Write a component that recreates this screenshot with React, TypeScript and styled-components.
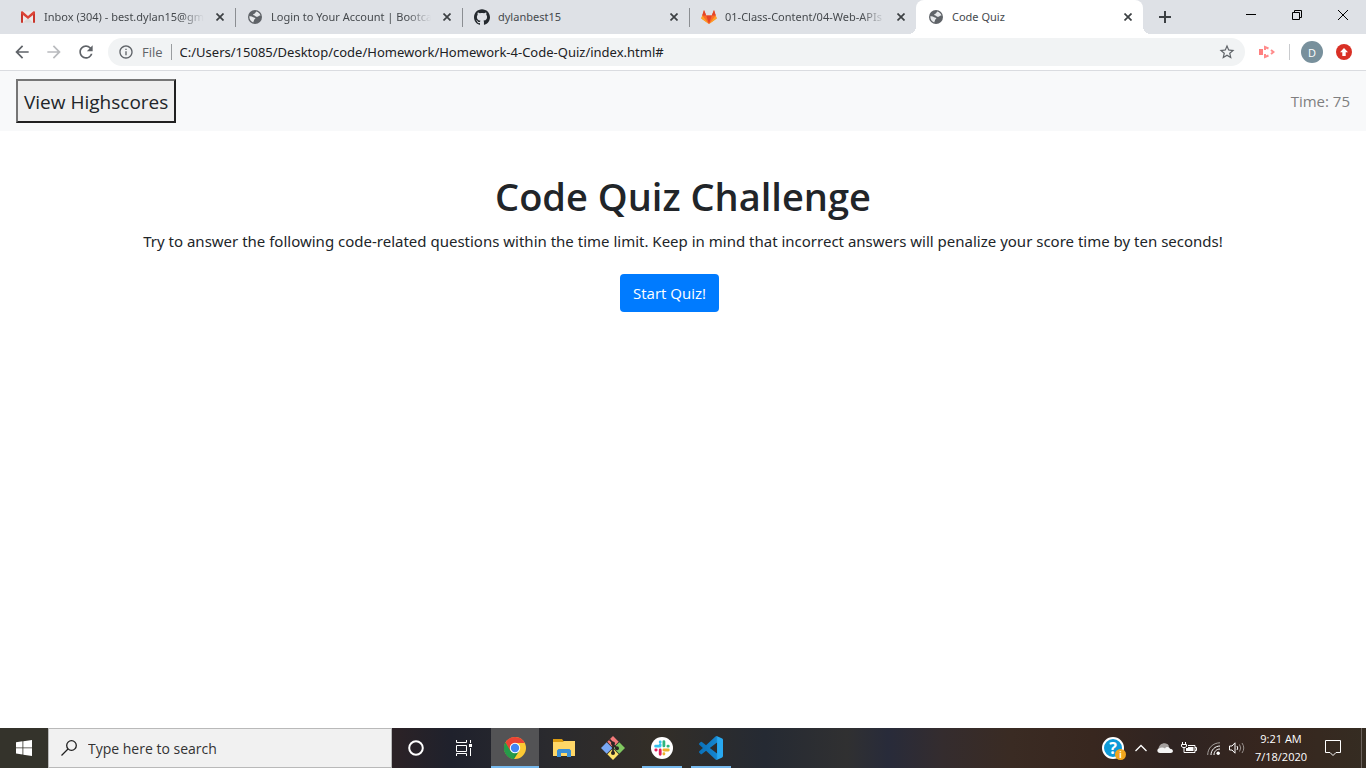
import React from "react";
import styled, { createGlobalStyle, css } from "styled-components";
import { SiGithub } from "react-icons/si";
import { MdRefresh, MdArrowBack, MdArrowForward, MdStarBorder, MdInfoOutline } from "react-icons/md";

const Global = createGlobalStyle`
  * { box-sizing: border-box; }
  html, body { margin: 0; }
  body {
    font-family: "Open Sans", "Segoe UI", sans-serif;
    background: #fff;
    color: #212529;
  }
  button, input { font-family: inherit; }
`;

const wideFont = `"Noto Sans", "Segoe UI", sans-serif`;

const iconButton = css`
  display: flex;
  align-items: center;
  justify-content: center;
  padding: 0;
  border: 0;
  background: none;
  color: inherit;
  flex: none;
`;

const Screen = styled.div`
  min-height: 100vh;
  display: flex;
  flex-direction: column;
`;

/* Browser tab strip */
const TabStrip = styled.header`
  display: flex;
  align-items: stretch;
  height: 34px;
  background: #dee1e6;
  color: #45494d;
`;

const Tabs = styled.div`
  display: flex;
  flex: 0 1 1135px;
  min-width: 0;
  margin-left: 8px;
`;

const Tab = styled.div<{ $active?: boolean; $divider?: boolean }>`
  position: relative;
  flex: 1 1 0;
  min-width: 0;
  display: flex;
  align-items: center;
  gap: 8px;
  padding: 0 7px 0 12px;
  border-radius: 8px 8px 0 0;
  background: ${(p) => (p.$active ? "#fff" : "transparent")};

  ${(p) =>
    p.$divider &&
    css`
      &::after {
        content: "";
        position: absolute;
        right: -1px;
        top: 8px;
        height: 19px;
        width: 1px;
        background: #8b8e92;
      }
    `}
  ${(p) =>
    p.$active &&
    css`
      &::before,
      &::after {
        content: "";
        position: absolute;
        bottom: 0;
        width: 8px;
        height: 8px;
      }
      &::before {
        right: 100%;
        background: radial-gradient(circle at 0 0, transparent 8px, #fff 8px);
      }
      &::after {
        left: 100%;
        background: radial-gradient(circle at 100% 0, transparent 8px, #fff 8px);
      }
    `}
`;

const TabIcon = styled.span`
  display: flex;
  flex: none;
  width: 16px;
  height: 16px;
  color: #5f6368;
`;

const TabTitle = styled.span<{ $fade?: boolean }>`
  flex: 1;
  min-width: 0;
  overflow: hidden;
  white-space: nowrap;
  font-family: ${wideFont};
  font-size: 11px;
  line-height: 16px;
  ${(p) => p.$fade && css`mask-image: linear-gradient(to left, transparent, #000 24px);`}
`;

const CloseTab = styled.button`
  ${iconButton}
  width: 16px;
  height: 16px;
  color: #3c4043;
`;

const NewTab = styled.button`
  ${iconButton}
  width: 28px;
  margin-left: 8px;
  color: #3c4043;
`;

const WindowControls = styled.div`
  display: flex;
  margin-left: auto;
  height: 29px;
`;

const WindowButton = styled.button`
  ${iconButton}
  width: 46px;
  color: #000;
`;

/* Browser toolbar */
const Toolbar = styled.div`
  display: flex;
  align-items: center;
  height: 37px;
  padding: 0 14px 0 12px;
  border-bottom: 1px solid #dadce0;
  color: #5f6368;
`;

const NavButtons = styled.div`
  display: flex;
  gap: 12px;
  margin-right: 12px;
`;

const ToolButton = styled.button<{ $muted?: boolean }>`
  ${iconButton}
  width: 20px;
  height: 20px;
  color: ${(p) => (p.$muted ? "#b9bbbe" : "#5f6368")};
`;

const AddressBar = styled.div`
  flex: 1;
  display: flex;
  align-items: center;
  height: 28px;
  padding: 0 8px 0 10px;
  border-radius: 14px;
  background: #f1f3f4;
  font-size: 13px;
`;

const Scheme = styled.label`
  margin-left: 8px;
  padding-right: 8px;
  line-height: 16px;
  border-right: 1px solid #9a9da0;
`;

const Url = styled.input`
  flex: 1;
  min-width: 0;
  padding: 0 8px;
  border: 0;
  outline: 0;
  background: none;
  font-family: ${wideFont};
  font-size: 13px;
  color: #202124;
`;

const ToolbarExtras = styled.div`
  display: flex;
  align-items: center;
  margin-left: 12px;
`;

const Separator = styled.span`
  width: 1px;
  height: 16px;
  margin: 0 11px 0 12px;
  background: #c9cbce;
`;

const Avatar = styled.button`
  ${iconButton}
  width: 22px;
  height: 22px;
  margin-right: 13px;
  border-radius: 50%;
  background: #78909c;
  color: #fff;
  font-size: 11px;
`;

/* Quiz page */
const Navbar = styled.nav`
  display: flex;
  align-items: center;
  justify-content: space-between;
  height: 60px;
  padding: 0 16px;
  background: #f8f9fa;
`;

const Highscores = styled.button`
  height: 44px;
  padding: 1px 6px 0;
  border: 2px solid;
  border-color: #767676 #212121 #212121 #767676;
  background: #efefef;
  color: #212529;
  font-size: 19px;
`;

const Timer = styled.span`
  font-size: 15px;
  color: #7f7f80;
`;

const Main = styled.main`
  flex: 1;
  display: flex;
  flex-direction: column;
  align-items: center;
  padding: 40px 16px 0;
  text-align: center;
`;

const Title = styled.h1`
  margin: 0 0 8px;
  font-size: 38px;
  font-weight: 600;
  line-height: 50px;
`;

const Intro = styled.p`
  margin: 0 0 21px;
  font-family: ${wideFont};
  font-size: 15px;
  line-height: 24px;
`;

const StartButton = styled.button`
  height: 38px;
  padding: 0 13px;
  margin-right: 27px;
  border: 0;
  border-radius: 4px;
  background: #007bff;
  color: #fff;
  font-size: 15px;
`;

/* Windows taskbar */
const Taskbar = styled.footer`
  display: flex;
  align-items: stretch;
  height: 40px;
  color: #fff;
  background: linear-gradient(
    90deg,
    #34332b 0%, #34332b 3%, #2b2226 29%, #1f212c 33%, #2a2a2e 40%, #332e27 48%,
    #252a33 56%, #303031 62%, #282b3a 65%, #342c2e 69%, #3a2b23 74%, #38271f 80%,
    #2f2422 86%, #37261e 93%, #352c22 100%
  );
`;

const StartMenu = styled.button`
  ${iconButton}
  width: 48px;
`;

const SearchBox = styled.label`
  display: flex;
  align-items: center;
  gap: 11px;
  flex: 0 1 344px;
  padding: 0 12px;
  border: 1px solid #b9b9b9;
  background: #f1f1f1;
  color: #202020;
`;

const SearchInput = styled.input`
  flex: 1;
  min-width: 0;
  padding: 0;
  border: 0;
  outline: 0;
  background: none;
  font-size: 14px;
  &::placeholder { color: #333; opacity: 1; }
`;

const SystemApps = styled.div`
  display: flex;
  margin-right: 3px;
`;

const Apps = styled.div`
  display: flex;
  gap: 1px;
`;

const AppButton = styled.button<{ $running?: boolean; $focused?: boolean }>`
  ${iconButton}
  position: relative;
  width: 48px;
  background: ${(p) => (p.$focused ? "#535355" : "none")};
  ${(p) =>
    (p.$running || p.$focused) &&
    css`
      &::after {
        content: "";
        position: absolute;
        bottom: 0;
        left: ${p.$focused ? 0 : 4}px;
        right: ${p.$focused ? 0 : 4}px;
        height: 2px;
        background: #76b9ed;
      }
    `}
`;

const Tray = styled.div`
  display: flex;
  align-items: center;
  margin-left: auto;
`;

const TrayButton = styled.button<{ $width?: number }>`
  ${iconButton}
  width: ${(p) => p.$width ?? 24}px;
  height: 36px;
`;

const HelpMark = styled.span`
  position: relative;
  display: flex;
  align-items: center;
  justify-content: center;
  width: 22px;
  height: 22px;
  border: 2px solid #fff;
  border-radius: 50%;
  background: #0e9ad8;
  color: #fff;
  font-size: 16px;
  font-weight: 700;
`;

const HelpBadge = styled.span`
  position: absolute;
  right: -4px;
  bottom: -3px;
  width: 11px;
  height: 11px;
  border-radius: 50%;
  background: #f0a51e;
  font-size: 8px;
  line-height: 11px;
  text-align: center;
`;

const Clock = styled.time`
  width: 64px;
  text-align: center;
  font-size: 11px;
  line-height: 18px;
`;

const ShowDesktop = styled.button`
  ${iconButton}
  width: 5px;
  height: 40px;
  margin-left: 8px;
  border-left: 1px solid #6b625d;
`;

const Cross = () => (
  <svg width="8" height="8" viewBox="0 0 8 8" stroke="currentColor" strokeWidth="1.7">
    <path d="M0.5 0.5 7.5 7.5M7.5 0.5 0.5 7.5" />
  </svg>
);

const Globe = () => (
  <svg width="16" height="16" viewBox="0 0 16 16">
    <circle cx="8" cy="8" r="7" fill="#5f6368" />
    <path
      d="M2.300 7.200C3.800 7 5 7.300 6.200 8.200 7.300 9 8.300 8.300 8.300 9.600c0 .9-1.200.6-1.300 1.600 0 .9-.5 1.300-.8 2.200C3.800 12.600 2.200 10.200 2.300 7.200zM9.300 2.500c2 .5 3.600 2 4.200 4-.9-.3-1.600.2-2.400.9-.9.7-2.100.6-2.600-.2-.5-.9-1.700-.5-2.300-1.200C5.800 5.200 7 5 7.800 4.500c.8-.5.700-1.300 1.500-2z"
      fill="#e6e8ea"
    />
  </svg>
);

const Gmail = () => (
  <svg width="16" height="16" viewBox="0 0 16 16">
    <path d="M1 2.500h14v11.300H1z" fill="#eceaea" />
    <path d="M3 13.800 8 9l5 4.800z" fill="#d9d9d9" />
    <path d="M1 13.800V3.600L3 4v9.800zM13 13.800V4l2-.4v10.200z" fill="#c9352b" />
    <path d="M1 4.600V3.200C1 2.200 2.200 2 2.800 2.600L8 7l5.200-4.400c.6-.6 1.800-.4 1.800.6v1.400L8 10z" fill="#db4437" />
  </svg>
);

const Gitlab = () => (
  <svg width="16" height="16" viewBox="0 0 16 16">
    <path d="M8 15 .3 9.400 3 1l2.300 5.500h5.400L13 1l2.700 8.400z" fill="#fc6d26" />
    <path d="M8 15 5.200 6.500h5.600z" fill="#e24329" />
    <path d="M8 15 .3 9.400l.9-2.900zM8 15l7.700-5.600-.9-2.900z" fill="#fca326" />
    <path d="M1.200 6.500 3 1l2.200 5.500zM14.800 6.500 13 1l-2.200 5.500z" fill="#e24329" />
  </svg>
);

const Chrome = () => (
  <svg width="24" height="24" viewBox="0 0 24 24">
    <circle cx="12" cy="12" r="11" fill="#fcc934" />
    <path d="M12 12 6.800 15 2.470 6.500A11 11 0 0 0 11 23l5.500-8.500z" fill="#1e8e3e" />
    <path d="M2.470 6.500A11 11 0 0 1 21.800 7H12l-5.200 8z" fill="#ea4335" />
    <path d="M2.470 6.500 7.200 14.500 12 17 10.500 22.900A11 11 0 0 1 2.470 6.500z" fill="#269a4a" />
    <circle cx="12" cy="12" r="5.200" fill="#fff" />
    <circle cx="12" cy="12" r="4.200" fill="#4285f4" />
  </svg>
);

const Explorer = () => (
  <svg width="22" height="18" viewBox="0 0 22 18">
    <path d="M0 0h9l1.500 2H21v5H0z" fill="#dc9c12" />
    <path d="M0 3h10l1-1h11v15H0z" fill="#ffd767" />
    <path d="M4 18v-6.500L5.500 10h11l1.500 1.500V18h-4v-4H8v4z" fill="#3a8fd6" />
  </svg>
);

const Git = () => (
  <svg width="24" height="24" viewBox="0 0 24 24">
    <path d="M12 0 17.700 5.700 12 11.400 6.300 5.700z" fill="#f37a7a" />
    <path d="M18.300 6.300 24 12l-5.700 5.700L12.600 12z" fill="#80c860" />
    <path d="M12 12.600l5.700 5.700L12 24l-5.700-5.700z" fill="#ffe36b" />
    <path d="M5.700 6.300 11.400 12l-5.700 5.700L0 12z" fill="#79a8f5" />
    <path d="M8.500 3.500 12 7v10M12 8.500l4 4" stroke="#2b2423" strokeWidth="1.700" fill="none" />
    <g fill="#2b2423"><circle cx="12" cy="7.500" r="2" /><circle cx="16" cy="12.200" r="2" /><circle cx="12" cy="17" r="2" /></g>
  </svg>
);

const Slack = () => (
  <svg width="22" height="22" viewBox="0 0 22 22">
    <circle cx="11" cy="11" r="11" fill="#fff" />
    <g strokeWidth="2.800" strokeLinecap="round">
      <path d="M9.200 8.600V8M4.600 9.200h4.400M9.200 4.800v.4" stroke="#36c5f0" />
      <path d="M12.900 4.600v4.300M17.300 9.200h-.4" stroke="#2eb67d" />
      <path d="M12.900 13h4.400M12.900 17v-.4" stroke="#ecb22e" />
      <path d="M9.200 13v4.300M4.800 13h.4" stroke="#e01e5a" />
    </g>
  </svg>
);

const VsCode = () => (
  <svg width="24" height="24" viewBox="0 0 24 24">
    <defs>
      <linearGradient id="vscode" x1="0" x2="1" y1="0" y2="0">
        <stop offset="0" stopColor="#0a70b8" />
        <stop offset="0.72" stopColor="#1585cf" />
        <stop offset="0.78" stopColor="#28a8f0" />
        <stop offset="1" stopColor="#28a8f0" />
      </linearGradient>
    </defs>
    <path
      fill="url(#vscode)"
      d="M23.150 2.587L18.210.21a1.494 1.494 0 0 0-1.705.29l-9.460 8.630-4.120-3.128a.999.999 0 0 0-1.276.057L.327 7.261A1 1 0 0 0 .326 8.740L3.899 12 .326 15.260a1 1 0 0 0 .001 1.479L1.650 17.940a.999.999 0 0 0 1.276.057l4.120-3.128 9.460 8.630a1.492 1.492 0 0 0 1.704.29l4.942-2.377A1.500 1.500 0 0 0 24 20.060V3.939a1.500 1.500 0 0 0-.85-1.352zm-5.146 14.861L10.826 12l7.178-5.448v10.896z"
    />
  </svg>
);

const tabs = [
  { title: "Inbox (304) - best.dylan15@gm", icon: <Gmail />, fade: true, divider: true },
  { title: "Login to Your Account | Bootca", icon: <Globe />, fade: true, divider: true },
  { title: "dylanbest15", icon: <SiGithub size={16} color="#24292e" />, divider: true },
  { title: "01-Class-Content/04-Web-APIs", icon: <Gitlab />, fade: true },
  { title: "Code Quiz", icon: <Globe />, active: true },
];

export default function App() {
  return (
    <Screen>
      <Global />
      <TabStrip>
        <Tabs>
          {tabs.map((t) => (
            <Tab key={t.title} $active={t.active} $divider={t.divider}>
              <TabIcon>{t.icon}</TabIcon>
              <TabTitle $fade={t.fade}>{t.title}</TabTitle>
              <CloseTab aria-label="Close tab"><Cross /></CloseTab>
            </Tab>
          ))}
        </Tabs>
        <NewTab aria-label="New tab">
          <svg width="12" height="12" viewBox="0 0 12 12" stroke="currentColor" strokeWidth="2"><path d="M6 0v12M0 6h12" /></svg>
        </NewTab>
        <WindowControls>
          <WindowButton aria-label="Minimize">
            <svg width="10" height="10" stroke="currentColor"><path d="M0 4.500h10" /></svg>
          </WindowButton>
          <WindowButton aria-label="Restore">
            <svg width="10" height="10" stroke="currentColor" fill="none"><path d="M.5 2.500h7v7h-7zM2.500 2.500v-2h7v7h-2" /></svg>
          </WindowButton>
          <WindowButton aria-label="Close">
            <svg width="10" height="10" stroke="currentColor"><path d="M0 0l10 10M10 0 0 10" /></svg>
          </WindowButton>
        </WindowControls>
      </TabStrip>

      <Toolbar>
        <NavButtons>
          <ToolButton aria-label="Back"><MdArrowBack size={20} /></ToolButton>
          <ToolButton aria-label="Forward" $muted><MdArrowForward size={20} /></ToolButton>
          <ToolButton aria-label="Reload"><MdRefresh size={20} /></ToolButton>
        </NavButtons>
        <AddressBar>
          <MdInfoOutline size={16} />
          <Scheme htmlFor="url">File</Scheme>
          <Url id="url" defaultValue="C:/Users/15085/Desktop/code/Homework/Homework-4-Code-Quiz/index.html#" />
          <ToolButton aria-label="Bookmark"><MdStarBorder size={18} /></ToolButton>
        </AddressBar>
        <ToolbarExtras>
          <ToolButton aria-label="Screencast extension">
            <svg width="16" height="14" viewBox="0 0 16 14"><path d="M0 4h4v6H0z" fill="#ff7f7f" /><path d="M6 5V2l3.500 1.500M12 5l2.500 2L12 9M9.500 10.500 6 12V9" fill="none" stroke="#ff8c8c" strokeWidth="2" /></svg>
          </ToolButton>
          <Separator />
          <Avatar aria-label="Profile">D</Avatar>
          <TrayButton aria-label="Update" $width={16}>
            <svg width="16" height="16" viewBox="0 0 16 16"><circle cx="8" cy="8" r="8" fill="#d93025" /><path d="M8 4 12 8.300H9.700V12H6.300V8.300H4z" fill="#fff" /></svg>
          </TrayButton>
        </ToolbarExtras>
      </Toolbar>

      <Navbar>
        <Highscores>View Highscores</Highscores>
        <Timer>Time: 75</Timer>
      </Navbar>
      <Main>
        <Title>Code Quiz Challenge</Title>
        <Intro>Try to answer the following code-related questions within the time limit. Keep in mind that incorrect answers will penalize your score time by ten seconds!</Intro>
        <StartButton>Start Quiz!</StartButton>
      </Main>

      <Taskbar>
        <StartMenu aria-label="Start">
          <svg width="16" height="16" viewBox="0 0 16 16" fill="#fff"><path d="M0 2.200 6.500 1.300v6.200H0zM7.300 1.200 16 0v7.500H7.300zM0 8.300h6.500v6.200L0 13.600zM7.300 8.300H16V16l-8.700-1.200z" /></svg>
        </StartMenu>
        <SearchBox>
          <svg width="16" height="16" viewBox="0 0 16 16" fill="none" stroke="currentColor" strokeWidth="1.300"><circle cx="10.500" cy="5.500" r="4.800" /><path d="M7 9 .5 15.500" /></svg>
          <SearchInput aria-label="Search" placeholder="Type here to search" />
        </SearchBox>
        <SystemApps>
          <AppButton aria-label="Cortana">
            <svg width="16" height="16"><circle cx="8" cy="8" r="6.800" fill="none" stroke="#fff" strokeWidth="2" /></svg>
          </AppButton>
          <AppButton aria-label="Task view">
            <svg width="16" height="16" fill="none" stroke="#fff"><path d="M.5 0v2.500h10V0M.5 5.500h10v6H.5zM.5 16v-2.500h10V16M14.500 0v3M14.500 8v8" /><path d="M13 4h3v3h-3z" fill="#fff" stroke="none" /></svg>
          </AppButton>
        </SystemApps>
        <Apps>
          <AppButton aria-label="Chrome" $focused><Chrome /></AppButton>
          <AppButton aria-label="File Explorer"><Explorer /></AppButton>
          <AppButton aria-label="Git Bash"><Git /></AppButton>
          <AppButton aria-label="Slack" $running><Slack /></AppButton>
          <AppButton aria-label="Visual Studio Code" $running><VsCode /></AppButton>
        </Apps>
        <Tray>
          <TrayButton aria-label="Help" $width={32}>
            <HelpMark>?<HelpBadge>i</HelpBadge></HelpMark>
          </TrayButton>
          <TrayButton aria-label="Show hidden icons">
            <svg width="12" height="8" fill="none" stroke="#fff" strokeWidth="1.300"><path d="M.5 7 6 1.500 11.500 7" /></svg>
          </TrayButton>
          <TrayButton aria-label="OneDrive">
            <svg width="16" height="10" viewBox="0 0 16 10">
              <path d="M1.500 6.500C1.500 2 5 0 8 .3c2.400.2 3.600 1.700 4 3.200L7 7z" fill="#a5a09e" />
              <path d="M3 10C0 10-.6 6.200 2 5.500 3.500 4.500 6 4 8 5.500c1-1.800 4.300-2 5 .2 3.800 0 3.800 4.300.5 4.300z" fill="#f4f4f4" />
            </svg>
          </TrayButton>
          <TrayButton aria-label="Battery">
            <svg width="16" height="12" viewBox="0 0 16 12" fill="none" stroke="#fff">
              <path d="M1.500 0v2M4.500 0v2M.5 2.500h5v2l-1.500 1H2l-1.500-1zM3 5.500v5h11v-7H7" />
              <path d="M14 5.500h1.500v3H14" />
              <path d="M5 6h2V5h5.500v4H5z" fill="#fff" stroke="none" />
            </svg>
          </TrayButton>
          <TrayButton aria-label="Wi-Fi">
            <svg width="13" height="13" viewBox="0 0 13 13" fill="none" stroke="#fff">
              <path d="M.7 13C.7 6 6 .8 13 .8" stroke="#a49f9c" />
              <path d="M4 13c0-5 4-9 9-9M7 13c0-3.500 2.500-6 6-6" />
              <circle cx="11.200" cy="11.200" r="1.700" fill="#fff" stroke="none" />
            </svg>
          </TrayButton>
          <TrayButton aria-label="Volume">
            <svg width="16" height="12" viewBox="0 0 16 12" fill="none" stroke="#fff">
              <path d="M.5 4H3l3-3.200v10.400L3 8H.5z" />
              <path d="M8 4q1.500 2 0 4" />
              <path d="M10.500 2.500q2.500 3.500 0 7M13 1q3.500 5 0 10" stroke="#99928e" />
            </svg>
          </TrayButton>
          <Clock>9:21 AM<br />7/18/2020</Clock>
          <TrayButton aria-label="Notifications" $width={40}>
            <svg width="16" height="17" fill="none" stroke="#fff"><path d="M.5.5h15v12H11l-3 3-3-3H.5z" /></svg>
          </TrayButton>
          <ShowDesktop aria-label="Show desktop" />
        </Tray>
      </Taskbar>
    </Screen>
  );
}
